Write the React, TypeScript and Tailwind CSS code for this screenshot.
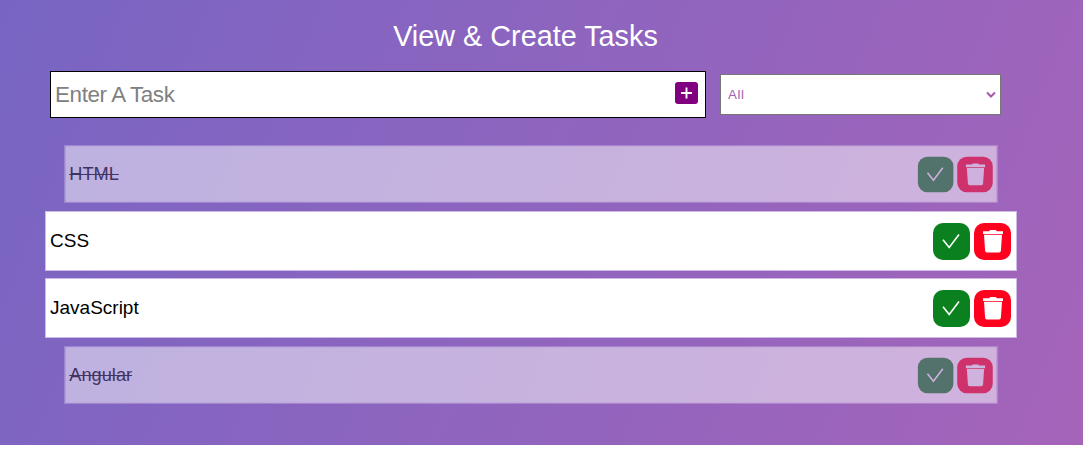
import React, { useState } from 'react';

type Task = { name: string; done: boolean };

const initialTasks: Task[] = [
  { name: 'HTML', done: true },
  { name: 'CSS', done: false },
  { name: 'JavaScript', done: false },
  { name: 'Angular', done: true },
];

function CheckIcon() {
  return (
    <svg viewBox="0 0 37 37" className="size-full" fill="none" stroke="white" strokeWidth="1.6">
      <path d="M10 16.7 L16.2 24.5 L26 11.5" />
    </svg>
  );
}

function TrashIcon() {
  return (
    <svg viewBox="0 0 37 37" className="size-full" fill="white">
      <path d="M9 8.2h6.2q.6-1.2 1.6-1.2h4.4q1 0 1.6 1.2H29v2.8H9z" />
      <path d="M10 11.8h18l-1.1 16q-.1 1.8-1.8 1.8H12.9q-1.7 0-1.8-1.8z" />
    </svg>
  );
}

function TaskRow({ task, onToggle, onRemove }: { task: Task; onToggle: () => void; onRemove: () => void }) {
  return (
    <li
      className={`flex h-[60px] items-center justify-between border bg-white pl-1 text-[19px] text-black ${
        task.done
          ? 'scale-[0.96] border-[#b797da] pr-1 line-through decoration-1 opacity-50'
          : 'border-[#cdb8e6] pr-[5px]'
      }`}
    >
      <span>{task.name}</span>
      <div className="flex gap-1">
        <button onClick={onToggle} aria-label="Complete" className="size-[37px] rounded-[10px] bg-[#0b801f]">
          <CheckIcon />
        </button>
        <button onClick={onRemove} aria-label="Delete" className="size-[37px] rounded-[10px] bg-[#ff001e]">
          <TrashIcon />
        </button>
      </div>
    </li>
  );
}

export default function App() {
  const [tasks, setTasks] = useState(initialTasks);
  return (
    <main className="h-[445px] w-[1083px] bg-[linear-gradient(112deg,#7865c3,#a564ba)] pt-[18px] font-['Liberation_Sans',Arial,sans-serif]">
      <h1 className="ml-[-32px] text-center text-[28.8px] leading-9 text-white">View &amp; Create Tasks</h1>
      <form className="mt-[17px] ml-[50px] flex items-center gap-[14px]" onSubmit={(e) => e.preventDefault()}>
        <div className="flex h-[47px] w-[656px] items-center border border-black bg-white pr-[7px] pl-1">
          <input
            placeholder="Enter A Task"
            className="h-full min-w-0 flex-1 text-[22.4px] tracking-[-0.38px] outline-none placeholder:text-[#808080]"
          />
          <button aria-label="Add" className="mb-[3px] h-[22px] w-[23px]">
            <svg viewBox="0 0 23 22" className="size-full">
              <rect width="23" height="22" rx="3" fill="#800080" />
              <path d="M6 11h11M11.5 5.5v11" stroke="white" strokeWidth="1.9" />
            </svg>
          </button>
        </div>
        <div className="flex h-[41px] w-[281px] items-center justify-between border border-[#767676] bg-white pr-1 pl-[7px] text-[13.33px] tracking-[0.6px] text-[#a05fae]">
          <span>All</span>
          <svg width="10" height="8" viewBox="0 0 10 8" fill="none" stroke="#a45aa6" strokeWidth="2">
            <path d="M1 1.5l4 4 4-4" />
          </svg>
        </div>
      </form>
      <ul className="mt-[26px] ml-[45px] flex w-[972px] flex-col gap-[7px]">
        {tasks.map((task) => (
          <TaskRow
            key={task.name}
            task={task}
            onToggle={() => setTasks(tasks.map((t) => (t === task ? { ...t, done: !t.done } : t)))}
            onRemove={() => setTasks(tasks.filter((t) => t !== task))}
          />
        ))}
      </ul>
    </main>
  );
}
